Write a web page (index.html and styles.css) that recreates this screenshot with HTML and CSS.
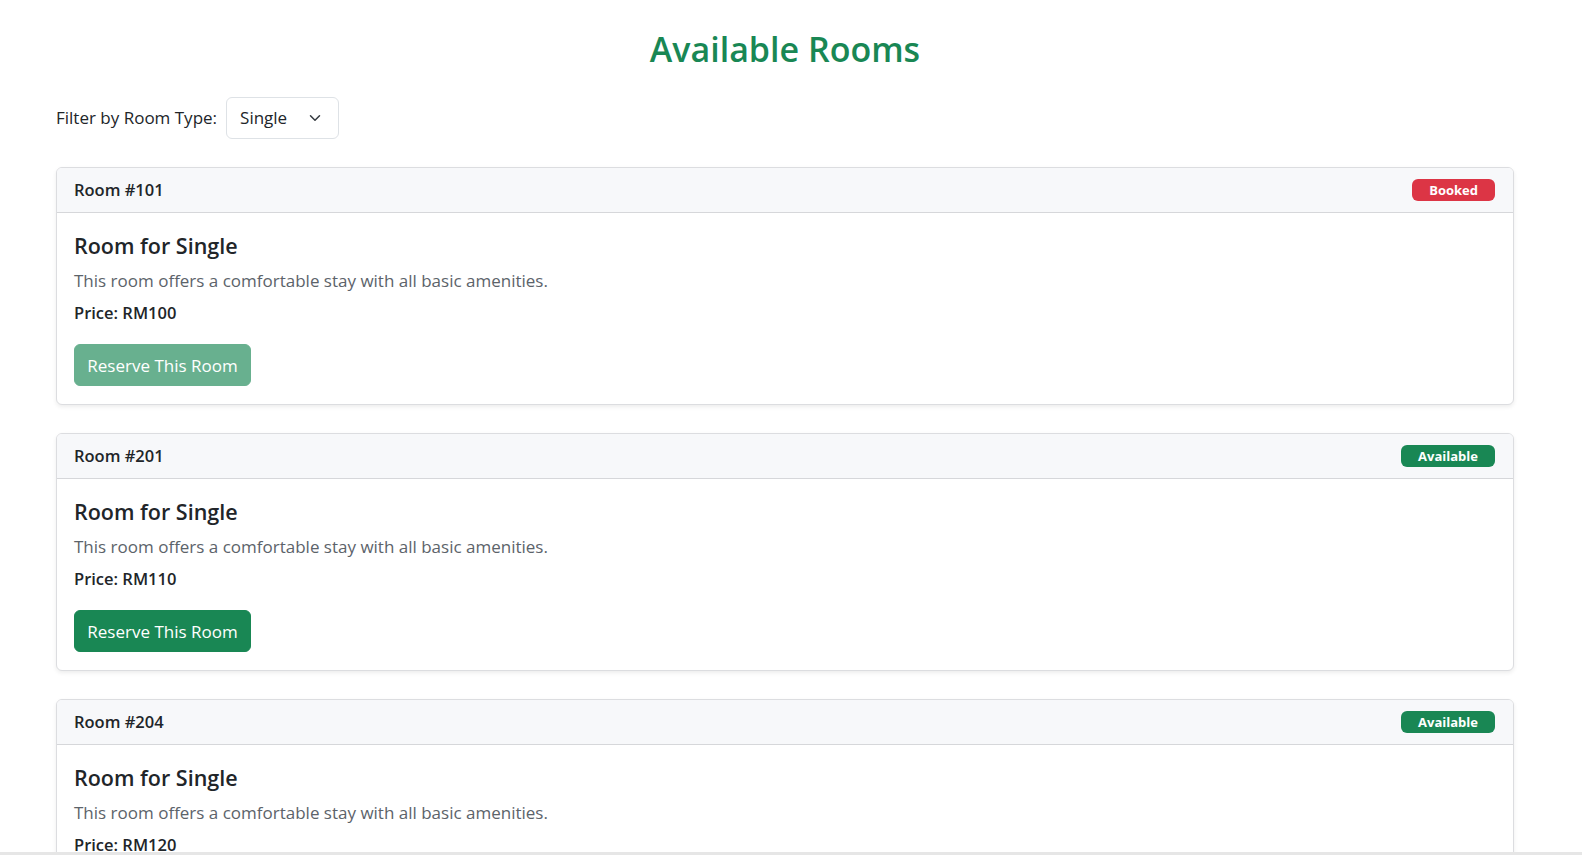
FILE: index.html
```html
<!DOCTYPE html>
<html lang="en">
<head>
<meta charset="utf-8">
<title>Available Rooms</title>
<link rel="stylesheet" href="styles.css">
</head>
<body>
<div class="container">
  <h1 class="page-title">Available Rooms</h1>
  <div class="filter">
    <label class="filter-label">Filter by Room Type:</label>
    <div class="select">
      <span>Single</span>
      <svg class="chev" width="12" height="12" viewBox="0 0 16 16"><path d="m2 5 6 6 6-6" fill="none" stroke="#343a40" stroke-width="2" stroke-linecap="round" stroke-linejoin="round"/></svg>
    </div>
  </div>

  <div class="card">
    <div class="card-header">
      <span class="room-no">Room #101</span>
      <span class="badge badge-danger">Booked</span>
    </div>
    <div class="card-body">
      <h4 class="card-title">Room for Single</h4>
      <p class="card-text">This room offers a comfortable stay with all basic amenities.</p>
      <p class="price">Price: RM100</p>
      <button class="btn disabled" disabled>Reserve This Room</button>
    </div>
  </div>

  <div class="card">
    <div class="card-header">
      <span class="room-no">Room #201</span>
      <span class="badge badge-success">Available</span>
    </div>
    <div class="card-body">
      <h4 class="card-title">Room for Single</h4>
      <p class="card-text">This room offers a comfortable stay with all basic amenities.</p>
      <p class="price">Price: RM110</p>
      <button class="btn">Reserve This Room</button>
    </div>
  </div>

  <div class="card">
    <div class="card-header">
      <span class="room-no">Room #204</span>
      <span class="badge badge-success">Available</span>
    </div>
    <div class="card-body">
      <h4 class="card-title">Room for Single</h4>
      <p class="card-text">This room offers a comfortable stay with all basic amenities.</p>
      <p class="price">Price: RM120</p>
      <button class="btn">Reserve This Room</button>
    </div>
  </div>
</div>
<div class="bottom-edge"></div>
</body>
</html>
```

FILE: styles.css
```css
* { box-sizing: border-box; }
html, body { margin: 0; padding: 0; }
body {
  font-family: "Open Sans", "Noto Sans", sans-serif;
  font-size: 17px;
  line-height: 24px;
  color: #212529;
  background: #fff;
  overflow: hidden;
}
.container {
  width: 1458px;
  margin-left: 56px;
  padding-top: 25px;
}
.page-title {
  margin: 0;
  text-align: center;
  font-size: 34px;
  font-weight: 600;
  line-height: 48px;
  color: #198754;
}
.filter {
  display: flex;
  align-items: center;
  gap: 9px;
  margin-top: 24px;
  margin-bottom: 28px;
}
.filter-label { color: #212529; }
.select {
  display: flex;
  align-items: center;
  justify-content: space-between;
  width: 113px;
  height: 42px;
  padding: 0 17px 0 13px;
  border: 1px solid #dee2e6;
  border-radius: 6px;
  background: #fff;
}
.chev { display: block; }
.card {
  border: 1px solid #dcdde0;
  border-radius: 6px;
  background: #fff;
  box-shadow: 0 2px 4px rgba(0,0,0,0.075);
  margin-bottom: 28px;
  overflow: hidden;
}
.card-header {
  display: flex;
  align-items: center;
  justify-content: space-between;
  height: 45px;
  padding: 0 18px 0 17px;
  background: #f7f8fa;
  border-bottom: 1px solid #d6d7da;
}
.room-no { font-weight: 600; font-size: 16.5px; }
.badge {
  display: inline-block;
  height: 22px;
  line-height: 22px;
  padding: 0 17px;
  border-radius: 6px;
  color: #fff;
  font-size: 13px;
  font-weight: 700;
}
.badge-danger { background: #dc3545; }
.badge-success { background: #198754; }
.card-body {
  padding: 18px 17px 18px;
}
.card-title {
  margin: 0 0 8px;
  font-size: 21.5px;
  font-weight: 600;
  line-height: 30px;
}
.card-text {
  margin: 0 0 8px;
  color: #5c636a;
}
.price {
  margin: 0 0 19px;
  font-weight: 600;
  font-size: 16.5px;
}
.btn {
  display: block;
  width: 177px;
  height: 42px;
  padding: 0;
  font-family: inherit;
  font-size: 17px;
  color: #fff;
  background: #198754;
  border: 1px solid #198754;
  border-radius: 6px;
  cursor: pointer;
}
.btn.disabled { opacity: 0.65; cursor: default; }
.bottom-edge {
  position: fixed;
  left: 0;
  right: 0;
  bottom: 0;
  height: 3px;
  background: #e6e6e6;
}
```
